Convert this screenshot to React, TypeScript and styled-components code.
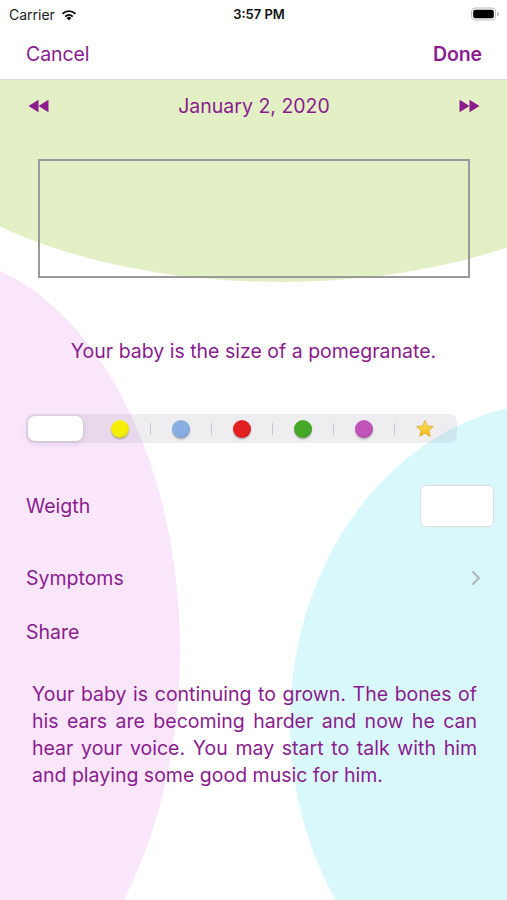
import React from "react";
import styled, { createGlobalStyle } from "styled-components";

const purple = "#8a1c8e";

const Global = createGlobalStyle`
  html, body { margin: 0; padding: 0; background: #fff; }
  body { font-family: Inter, "Noto Sans", sans-serif; -webkit-font-smoothing: antialiased; }
  * { box-sizing: border-box; }
`;

const Page = styled.div`
  position: relative;
  width: 507px;
  height: 900px;
  overflow: hidden;
  background: #fff;
`;

const Blob = styled.div<{ $c: string; $l: number; $t: number; $w: number; $h: number }>`
  position: absolute;
  left: ${(p) => p.$l}px;
  top: ${(p) => p.$t}px;
  width: ${(p) => p.$w}px;
  height: ${(p) => p.$h}px;
  border-radius: 50%;
  background: ${(p) => p.$c};
  z-index: 0;
`;

const Content = styled.div`
  position: relative;
  z-index: 1;
  display: flex;
  flex-direction: column;
`;

const StatusBar = styled.div`
  height: 28px;
  display: grid;
  grid-template-columns: 1fr auto 1fr;
  align-items: center;
  padding: 0 8px 0 9px;
  background: #fff;
  color: #111;
`;

const Carrier = styled.div`
  display: flex;
  align-items: center;
  gap: 5px;
  font-size: 14px;
  color: #222;
`;

const Time = styled.div`
  font-size: 13px;
  font-weight: 600;
  padding-left: 10px;
`;

const BatteryWrap = styled.div`
  justify-self: end;
  display: flex;
  align-items: center;
`;

const NavBar = styled.div`
  height: 52px;
  background: #fff;
  border-bottom: 1px solid #dcdcd6;
  display: flex;
  align-items: center;
  justify-content: space-between;
  padding: 0 25px 0 26px;
`;

const NavButton = styled.span<{ $bold?: boolean }>`
  font-size: 19.5px;
  color: ${purple};
  font-weight: ${(p) => (p.$bold ? 600 : 400)};
  letter-spacing: -0.1px;
`;

const DateRow = styled.div`
  height: 52px;
  display: flex;
  align-items: center;
  justify-content: space-between;
  padding: 0 27px 0 28px;
`;

const DateLabel = styled.span`
  font-size: 19.5px;
  color: ${purple};
`;

const ImageBox = styled.div`
  margin: 27px 37px 0 38px;
  height: 119px;
  border: 2px solid #9a9a9a;
`;

const SizeText = styled.div`
  margin-top: 61px;
  text-align: center;
  font-size: 19.5px;
  color: ${purple};
  line-height: 24px;
`;

const Segmented = styled.div`
  margin: 51px 0 0 26px;
  width: 431px;
  height: 29px;
  border-radius: 8px;
  background: rgba(118, 118, 128, 0.12);
  display: grid;
  grid-template-columns: repeat(7, 1fr);
  align-items: center;
  padding: 2px;
`;

const Segment = styled.div<{ $selected?: boolean; $sep?: boolean }>`
  position: relative;
  height: 25px;
  display: flex;
  align-items: center;
  justify-content: center;
  border-radius: 7px;
  background: ${(p) => (p.$selected ? "#fff" : "transparent")};
  box-shadow: ${(p) => (p.$selected ? "0 2px 6px rgba(0,0,0,0.12), 0 0 0 0.5px rgba(0,0,0,0.04)" : "none")};
  margin-right: ${(p) => (p.$selected ? "6px" : "0")};
  &::before {
    content: "";
    display: ${(p) => (p.$sep ? "block" : "none")};
    position: absolute;
    left: 0;
    top: 7px;
    height: 12px;
    width: 1px;
    background: rgba(60, 60, 67, 0.22);
  }
`;

const Dot = styled.span<{ $c: string }>`
  width: 18px;
  height: 18px;
  border-radius: 50%;
  background: radial-gradient(circle at 40% 35%, ${(p) => p.$c} 55%, rgba(0,0,0,0.18) 100%), ${(p) => p.$c};
  box-shadow: 0 1.5px 1.5px rgba(0, 0, 0, 0.25);
`;

const Row = styled.div<{ $h: number; $mt?: number; $pr?: number }>`
  height: ${(p) => p.$h}px;
  margin-top: ${(p) => p.$mt ?? 0}px;
  display: flex;
  align-items: center;
  justify-content: space-between;
  padding: 0 ${(p) => p.$pr ?? 13}px 0 26px;
`;

const RowLabel = styled.span`
  font-size: 19.5px;
  color: ${purple};
`;

const Field = styled.div`
  width: 74px;
  height: 42px;
  border: 1px solid #dedede;
  border-radius: 6px;
  background: #fff;
`;

const Paragraph = styled.p`
  margin: 23px 30px 0 32px;
  font-size: 19.5px;
  line-height: 27px;
  color: ${purple};
  text-align: justify;
  text-align-last: left;
`;

const Wifi = () => (
  <svg width="18" height="13" viewBox="0 0 18 13">
    <path d="M9 12.5 L6.6 9.9 A3.4 3.4 0 0 1 11.4 9.9 Z" fill="#111" />
    <path d="M4.6 7.9 A6.2 6.2 0 0 1 13.4 7.9 L12.1 9.3 A4.4 4.4 0 0 0 5.9 9.3 Z" fill="#111" />
    <path d="M1.9 5.1 A10.1 10.1 0 0 1 16.1 5.1 L14.8 6.5 A8.2 8.2 0 0 0 3.2 6.5 Z" fill="#111" />
  </svg>
);

const Battery = () => (
  <svg width="28" height="14" viewBox="0 0 28 14">
    <rect x="0.5" y="1" width="24" height="12" rx="3.5" fill="none" stroke="#bbb" strokeWidth="1" />
    <rect x="2.2" y="2.7" width="20.6" height="8.6" rx="2" fill="#000" />
    <path d="M26 5 A2 2 0 0 1 26 9 Z" fill="#bbb" />
  </svg>
);

const Arrows = ({ dir }: { dir: "l" | "r" }) => (
  <svg width="22" height="14" viewBox="0 0 22 14" style={{ transform: dir === "r" ? "scaleX(-1)" : undefined }}>
    <path d="M0.5 7 L10.5 0.8 L10.5 13.2 Z" fill={purple} />
    <path d="M10.5 7 L20.5 0.8 L20.5 13.2 Z" fill={purple} />
  </svg>
);

const Star = () => (
  <svg width="20" height="20" viewBox="0 0 24 24">
    <defs>
      <linearGradient id="sg" x1="0" y1="0" x2="0" y2="1">
        <stop offset="0" stopColor="#ffe97a" />
        <stop offset="1" stopColor="#f2b705" />
      </linearGradient>
    </defs>
    <path
      d="M12 1.8 L14.9 8.4 L22 9.1 L16.6 13.8 L18.2 20.8 L12 17.1 L5.8 20.8 L7.4 13.8 L2 9.1 L9.1 8.4 Z"
      fill="url(#sg)"
      stroke="#d99a00"
      strokeWidth="0.8"
      strokeLinejoin="round"
    />
  </svg>
);

const Chevron = () => (
  <svg width="10" height="16" viewBox="0 0 10 16">
    <path d="M2 2 L8 8 L2 14" fill="none" stroke="#b4b4bc" strokeWidth="2" strokeLinecap="round" strokeLinejoin="round" />
  </svg>
);

const colors = ["#f6ef00", "#88aee2", "#e22020", "#45a827", "#c054b8"];

export default function App() {
  return (
    <Page>
      <Global />
      <Blob $c="#e3efc4" $l={-130} $t={-130} $w={820} $h={412} />
      <Blob $c="#f9e6fb" $l={-320} $t={255} $w={500} $h={790} />
      <Blob $c="#d9f8fc" $l={290} $t={402} $w={540} $h={640} />
      <Content>
        <StatusBar>
          <Carrier>
            Carrier <Wifi />
          </Carrier>
          <Time>3:57 PM</Time>
          <BatteryWrap>
            <Battery />
          </BatteryWrap>
        </StatusBar>
        <NavBar>
          <NavButton>Cancel</NavButton>
          <NavButton $bold>Done</NavButton>
        </NavBar>
        <DateRow>
          <Arrows dir="l" />
          <DateLabel>January 2, 2020</DateLabel>
          <Arrows dir="r" />
        </DateRow>
        <ImageBox />
        <SizeText>Your baby is the size of a pomegranate.</SizeText>
        <Segmented>
          <Segment $selected />
          <Segment>
            <Dot $c={colors[0]} />
          </Segment>
          {colors.slice(1).map((c) => (
            <Segment key={c} $sep>
              <Dot $c={c} />
            </Segment>
          ))}
          <Segment $sep>
            <Star />
          </Segment>
        </Segmented>
        <Row $h={70} $mt={28}>
          <RowLabel>Weigth</RowLabel>
          <Field />
        </Row>
        <Row $h={56} $mt={9} $pr={26}>
          <RowLabel>Symptoms</RowLabel>
          <Chevron />
        </Row>
        <Row $h={52}>
          <RowLabel>Share</RowLabel>
        </Row>
        <Paragraph>
          Your baby is continuing to grown. The bones of his ears are becoming harder and now he can hear your voice.
          You may start to talk with him and playing some good music for him.
        </Paragraph>
      </Content>
    </Page>
  );
}
